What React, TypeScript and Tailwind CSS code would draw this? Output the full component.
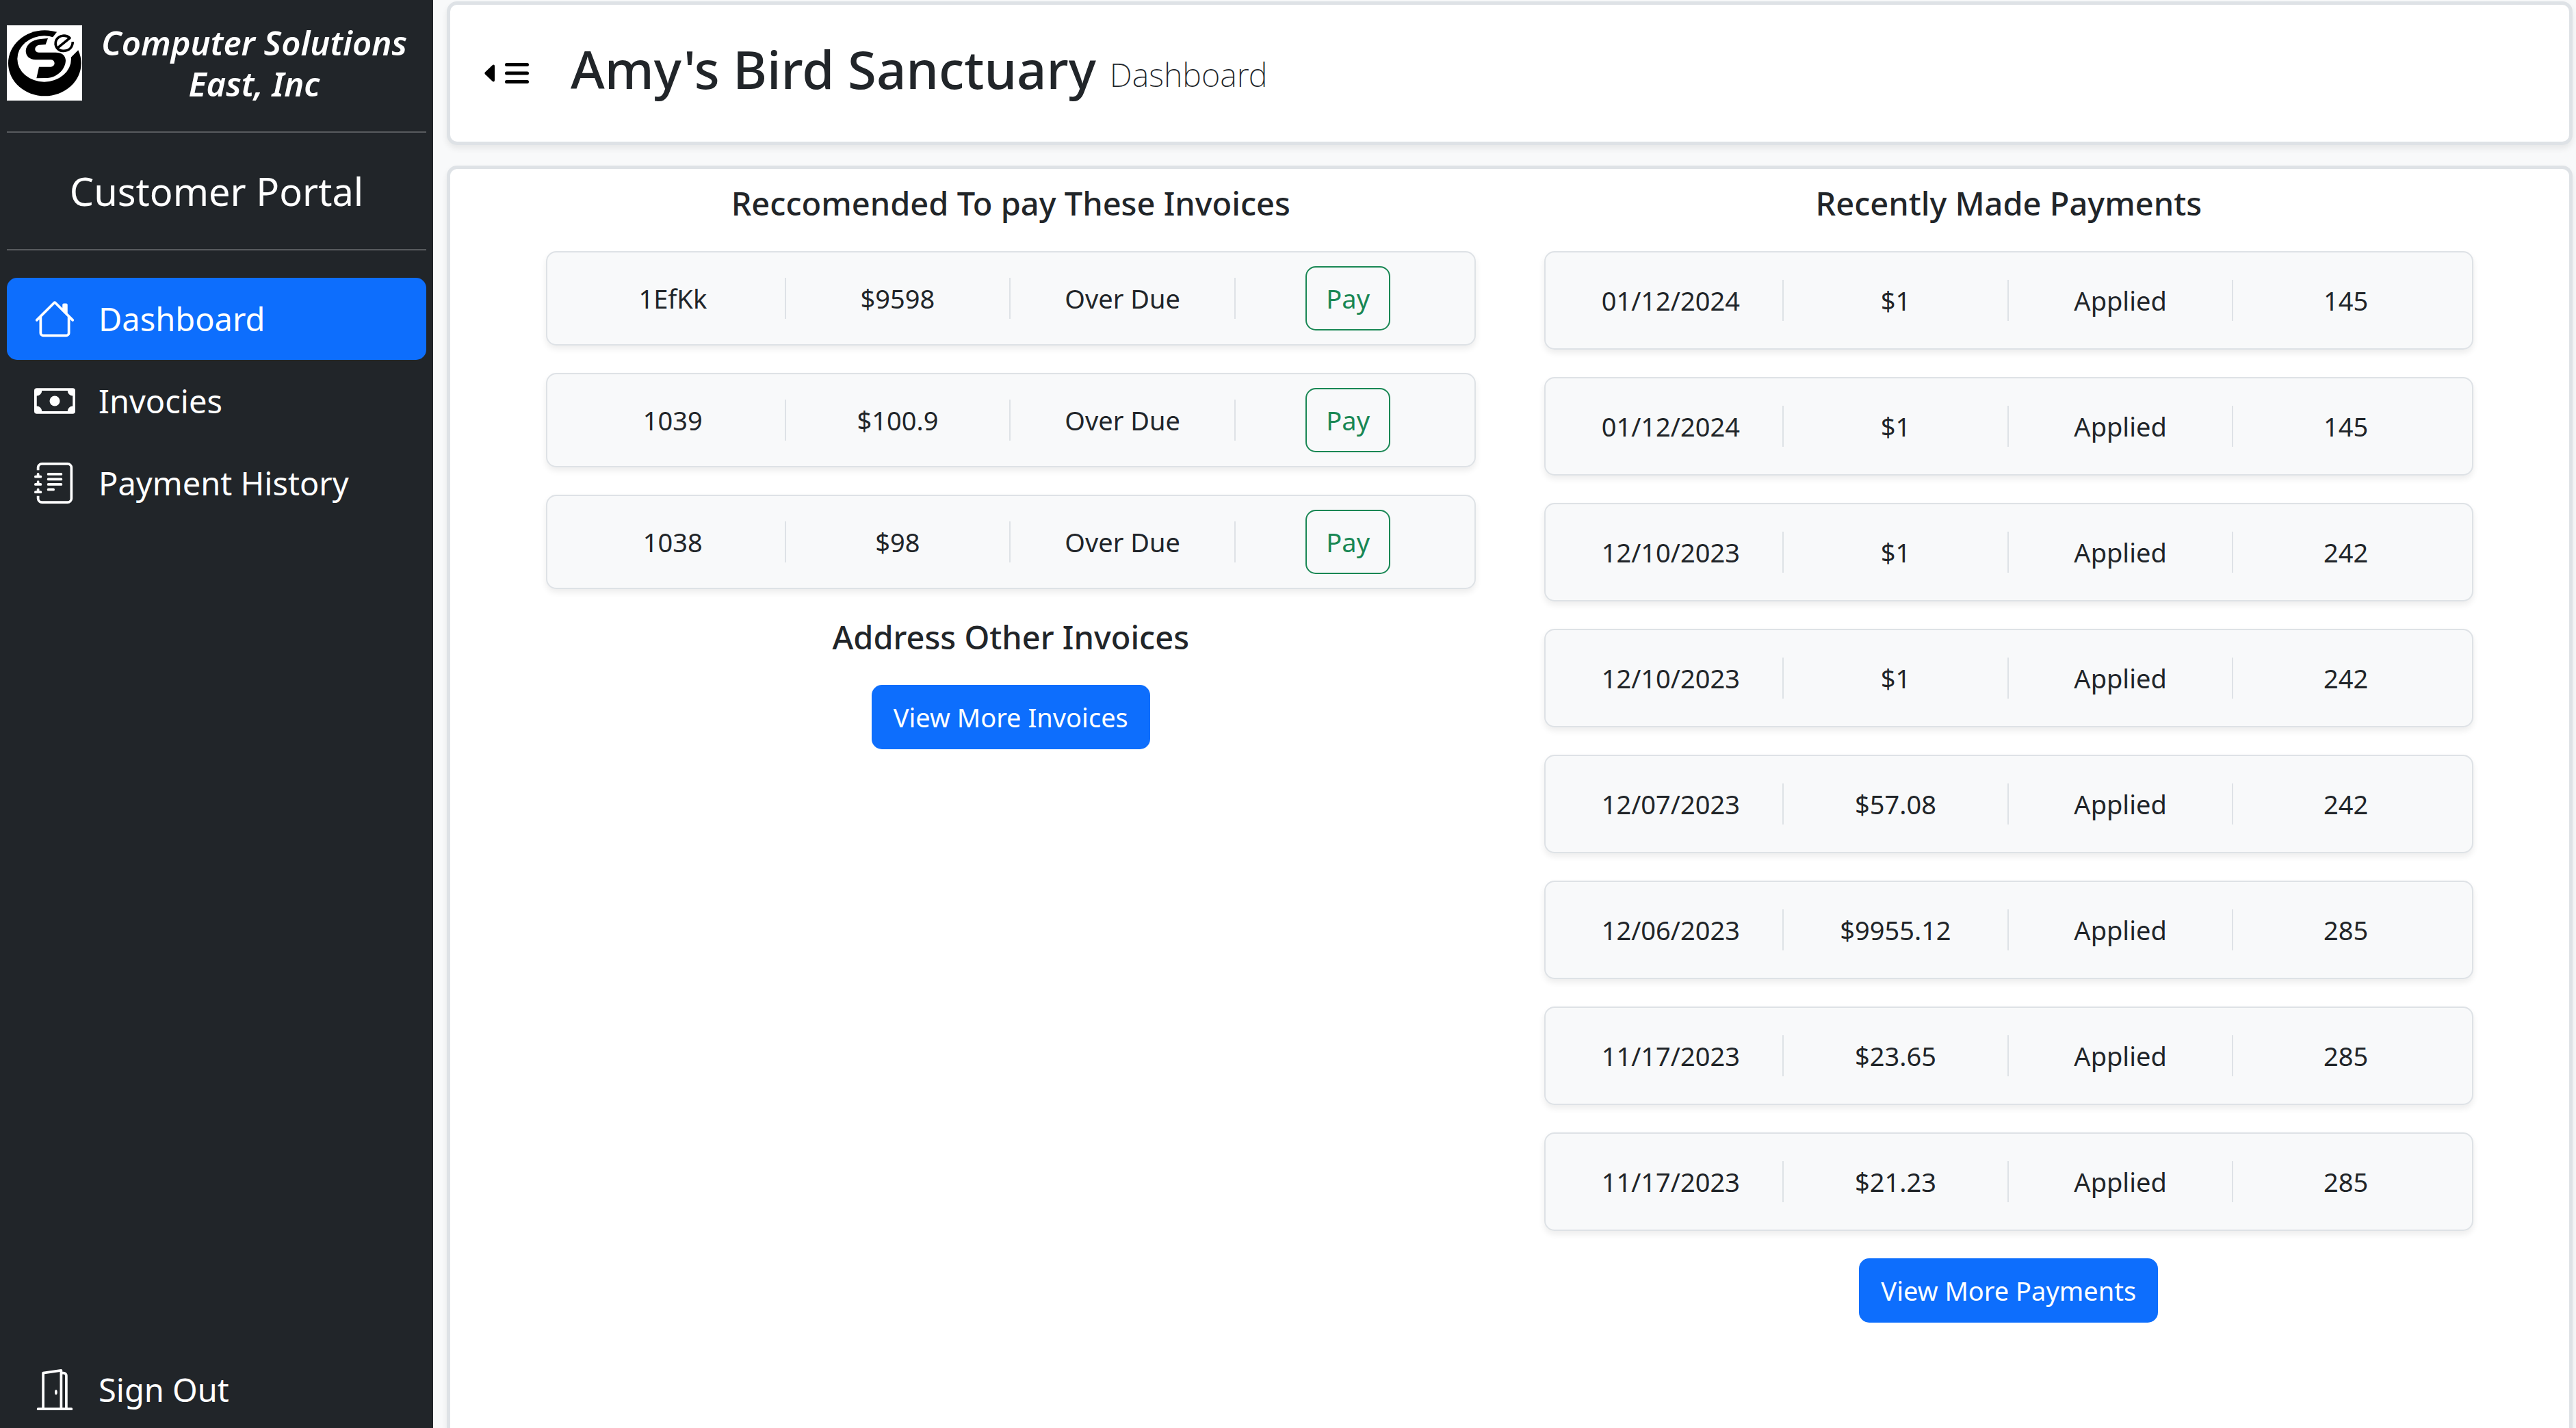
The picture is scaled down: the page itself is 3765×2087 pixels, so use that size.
import type { ReactNode } from "react";
import { BsCash, BsDoorOpen, BsHouse, BsJournalText } from "react-icons/bs";

const invoices = [
  { id: "1EfKk", amount: "$9598", status: "Over Due" },
  { id: "1039", amount: "$100.9", status: "Over Due" },
  { id: "1038", amount: "$98", status: "Over Due" },
];

const payments = [
  ["01/12/2024", "$1", "Applied", "145"],
  ["01/12/2024", "$1", "Applied", "145"],
  ["12/10/2023", "$1", "Applied", "242"],
  ["12/10/2023", "$1", "Applied", "242"],
  ["12/07/2023", "$57.08", "Applied", "242"],
  ["12/06/2023", "$9955.12", "Applied", "285"],
  ["11/17/2023", "$23.65", "Applied", "285"],
  ["11/17/2023", "$21.23", "Applied", "285"],
];

function Logo() {
  return (
    <svg viewBox="0 0 330 330" className="size-[110px] shrink-0 bg-white" role="img" aria-label="Computer Solutions East logo">
      <ellipse cx="166" cy="166" rx="160" ry="144" fill="#000" />
      <ellipse cx="164" cy="147" rx="118" ry="101" fill="#fff" />
      <path d="M228 18 L200 54 L212 120 L280 142 L316 106 L330 90 L330 10 Z" fill="#fff" />
      <path
        d="M180 57 L148 60 C108 64 84 86 83 112 C83 136 100 150 126 151 L194 151 C214 153 214 180 194 182 L141 182 L130 232 L176 231 C222 228 258 192 258 152 C256 130 240 119 214 119 L140 119 C118 118 118 90 142 86 L170 84 Z"
        fill="#000"
      />
      <path d="M224 98 L276 56 C260 40 230 42 217 64 C206 90 224 114 250 112 C272 111 288 98 289 72" fill="none" stroke="#000" strokeWidth="11" strokeLinejoin="round" />
    </svg>
  );
}

function CollapseIcon() {
  return (
    <svg viewBox="0 0 80 32" className="h-8 w-20" aria-hidden="true">
      <path d="M11 17.5 L22 28 Q25 29.500 25 26 V6 Q25 2.500 22 4 L11 14.500 Q9.500 16 11 17.500 Z" fill="#000" />
      <path d="M42.500 3.500 H72.500 M42.500 16 H72.500 M42.500 28.500 H72.500" stroke="#000" strokeWidth="5" strokeLinecap="round" />
    </svg>
  );
}

function NavLink({ icon, label, active }: { icon: ReactNode; label: string; active?: boolean }) {
  return (
    <a
      href="#"
      aria-current={active ? "page" : undefined}
      className={`flex items-center gap-[34px] rounded-[15px] px-10 py-5 text-[47px] leading-[80px] ${active ? "bg-[#0d6efd]" : ""}`}
    >
      {icon}
      {label}
    </a>
  );
}

function Heading({ children }: { children: ReactNode }) {
  return <h2 className="text-center text-[47px] leading-[60px] font-medium">{children}</h2>;
}

function Cell({ children }: { children: ReactNode }) {
  return <td className="h-[60px] border-r-2 border-[#dee2e6] leading-[60px] last:border-r-0">{children}</td>;
}

function Row({ children, tall }: { children: ReactNode; tall?: boolean }) {
  return (
    <tr
      className={`grid grid-cols-4 items-center rounded-[15px] border-2 border-[#dee2e6] bg-[#f8f9fa] px-5 text-center shadow-[0_5px_10px_rgba(0,0,0,0.075)] ${tall ? "py-10" : "py-5"}`}
    >
      {children}
    </tr>
  );
}

function PrimaryButton({ children }: { children: ReactNode }) {
  return (
    <button type="button" className="h-[94px] self-center rounded-[15px] bg-[#0d6efd] px-8 leading-[60px] text-white">
      {children}
    </button>
  );
}

export default function App() {
  return (
    <div className="flex h-screen overflow-hidden bg-[#f8f9fa] font-['Noto_Sans',sans-serif] text-[38px] text-[#212529]">
      <aside className="flex w-[633px] shrink-0 flex-col bg-[#212529] px-[10px] pb-4 text-white">
        <div className="flex items-center pt-8 pb-10">
          <Logo />
          <p className="flex-1 text-center text-[49px] leading-[60px] font-semibold italic">Computer Solutions East, Inc</p>
        </div>
        <hr className="border-t-2 border-[#585b5e]" />
        <p className="py-10 text-center text-[56px] leading-[90px]">Customer Portal</p>
        <hr className="border-t-2 border-[#585b5e]" />
        <nav className="mt-10 flex flex-col">
          <NavLink active label="Dashboard" icon={<BsHouse className="size-[60px]" />} />
          <NavLink label="Invocies" icon={<BsCash className="size-[60px]" />} />
          <NavLink label="Payment History" icon={<BsJournalText className="size-[60px]" />} />
        </nav>
        <button type="button" className="mt-auto flex items-center gap-[34px] px-10 text-[47px] leading-[80px]">
          <BsDoorOpen className="size-[60px]" />
          Sign Out
        </button>
      </aside>

      <div className="flex min-w-0 flex-1 flex-col gap-[30px] pt-[2px] pr-[5px] pl-5">
        <header className="flex items-center gap-14 rounded-[15px] border-[5px] border-[#dee2e6] bg-white px-10 py-[46px] shadow-[0_5px_10px_rgba(0,0,0,0.075)]">
          <button type="button" aria-label="Collapse menu">
            <CollapseIcon />
          </button>
          <h1 className="mb-3 flex items-end gap-5 text-[76px] leading-[96px] font-medium">
            Amy's Bird Sanctuary
            <small className="text-[47px] leading-[80px] font-extralight">Dashboard</small>
          </h1>
        </header>

        <main className="grid flex-1 grid-cols-2 items-start gap-[100px] rounded-t-[15px] border-[5px] border-b-0 border-[#dee2e6] bg-white px-[140px] pt-5 shadow-[0_5px_10px_rgba(0,0,0,0.075)]">
          <section className="flex flex-col gap-10">
            <Heading>Reccomended To pay These Invoices</Heading>
            <table className="block" aria-label="Invoices to pay">
              <tbody className="flex flex-col gap-10">
                {invoices.map((invoice) => (
                  <Row key={invoice.id}>
                    <Cell>{invoice.id}</Cell>
                    <Cell>{invoice.amount}</Cell>
                    <Cell>{invoice.status}</Cell>
                    <td>
                      <button type="button" className="mx-auto block h-[94px] rounded-[15px] border-2 border-[#198754] px-7 leading-[60px] text-[#198754]">
                        Pay
                      </button>
                    </td>
                  </Row>
                ))}
              </tbody>
            </table>
            <Heading>Address Other Invoices</Heading>
            <PrimaryButton>View More Invoices</PrimaryButton>
          </section>

          <section className="flex flex-col gap-10">
            <Heading>Recently Made Payments</Heading>
            <table className="block" aria-label="Recent payments">
              <tbody className="flex flex-col gap-10">
                {payments.map((payment, index) => (
                  <Row key={index} tall>
                    {payment.map((value) => (
                      <Cell key={value}>{value}</Cell>
                    ))}
                  </Row>
                ))}
              </tbody>
            </table>
            <PrimaryButton>View More Payments</PrimaryButton>
          </section>
        </main>
      </div>
    </div>
  );
}
